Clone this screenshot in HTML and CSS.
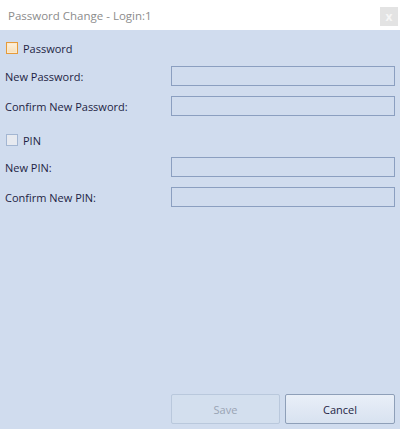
FILE: index.html
```html
<!DOCTYPE html>
<html lang="en">
<head>
    <meta charset="UTF-8">
    <title>Password Change - Login:1</title>
    <link rel="stylesheet" href="styles.css">
</head>
<body>
    <div class="window">
        <div class="titlebar">
            <span class="title">Password Change - Login:1</span>
            <span class="close-button">x</span>
        </div>

        <div class="content">
            <label class="check-row">
                <span class="checkbox focused"></span>
                <span>Password</span>
            </label>
            <div class="field-row first">
                <span class="field-label">New Password:</span>
                <input type="password" class="field-input">
            </div>
            <div class="field-row">
                <span class="field-label">Confirm New Password:</span>
                <input type="password" class="field-input">
            </div>

            <label class="check-row pin">
                <span class="checkbox"></span>
                <span>PIN</span>
            </label>
            <div class="field-row first">
                <span class="field-label">New PIN:</span>
                <input type="password" class="field-input">
            </div>
            <div class="field-row">
                <span class="field-label">Confirm New PIN:</span>
                <input type="password" class="field-input">
            </div>
        </div>

        <div class="footer">
            <button class="save-button" disabled>Save</button>
            <button class="cancel-button">Cancel</button>
        </div>
    </div>
</body>
</html>
```

FILE: styles.css
```css
* {
    margin: 0;
    padding: 0;
    box-sizing: border-box;
}

body {
    font-family: "Open Sans", "Noto Sans", sans-serif;
    font-size: 11px;
    color: #1e1f44;
    background-color: #d0dcee;
}

.window {
    display: flex;
    flex-direction: column;
    height: 429px;
}

.titlebar {
    height: 30px;
    background-color: #fff;
    display: flex;
    align-items: center;
    justify-content: space-between;
    padding: 0 2px 0 8px;
}

.title {
    color: #8c8c8c;
    font-size: 11.5px;
    padding-top: 1px;
}

.close-button {
    width: 18px;
    height: 19px;
    margin-top: 2px;
    background-color: #e3e3e3;
    color: #f6f6f6;
    font-size: 12px;
    font-weight: bold;
    display: flex;
    align-items: center;
    justify-content: center;
}

.content {
    padding: 8px 5px 0 5px;
}

.check-row {
    display: flex;
    align-items: center;
    height: 20px;
    padding-left: 1px;
    gap: 5px;
}

.check-row.pin {
    margin-top: 14px;
}

.checkbox {
    width: 12px;
    height: 12px;
    border: 1px solid #a3b6d2;
    background-color: #e7eaf0;
}

.checkbox.focused {
    border-color: #e69b3a;
    background: linear-gradient(#fdf1de, #f7dfb8);
    box-shadow: inset 0 0 0 1px #fbe9cd;
}

.field-row {
    display: flex;
    align-items: center;
    margin-top: 10px;
}

.field-row.first {
    margin-top: 8px;
}

.field-row.first ~ .field-row.first {
    margin-top: 7px;
}

.field-label {
    width: 166px;
}

.field-input {
    width: 224px;
    height: 20px;
    border: 1px solid #8b9fc0;
    background-color: #d0dcee;
    outline: none;
}

.footer {
    margin-top: auto;
    display: flex;
    justify-content: flex-end;
    gap: 5px;
    padding: 0 5px 5px 0;
}

.footer button {
    height: 30px;
    border-radius: 2px;
    font-family: "Open Sans", "Noto Sans", sans-serif;
    font-size: 11px;
}

.save-button {
    width: 109px;
    border: 1px solid #b9c8dc;
    background-color: #d3dfee;
    color: #9aa4b4;
}

.cancel-button {
    width: 110px;
    border: 1px solid #8e9fb8;
    background: linear-gradient(#e9eff8, #d8e2f0);
    color: #1e1f44;
}
```
